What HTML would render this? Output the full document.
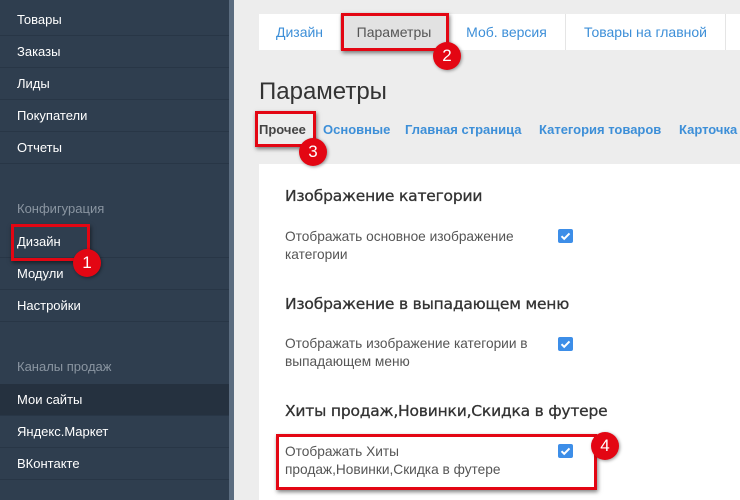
<!DOCTYPE html>
<html><head><meta charset="utf-8"><style>
*{margin:0;padding:0;box-sizing:border-box}
body{width:740px;height:500px;overflow:hidden;background:#ededed;font-family:"Liberation Sans","DejaVu Sans",sans-serif;position:relative}
.sb{position:absolute;left:0;top:0;width:229px;height:500px;background:#2f3e4f}
.strip{position:absolute;left:229px;top:0;width:5px;height:500px;background:#5b6c7f}
.it{position:absolute;left:0;width:229px;height:32px;color:#fff;font-size:13px;padding-left:17px;line-height:32px;border-bottom:1px solid #283646}
.hd{position:absolute;left:17px;color:#8a95a1;font-size:13px}
.abs{position:absolute}
.red{position:absolute;border:3px solid #e30613;box-shadow:1px 2px 4px rgba(0,0,0,.5)}
.num{position:absolute;width:28px;height:28px;border-radius:50%;background:#e30613;color:#fff;font-size:17px;text-align:center;line-height:28px;box-shadow:1px 1px 3px rgba(0,0,0,.4)}
.tab{position:absolute;top:14px;height:36px;line-height:36px;font-size:14px;color:#3d8fd8;text-align:center}
.sub{position:absolute;top:122px;font-size:13px;font-weight:bold;color:#3d8fd8}
.h{position:absolute;left:285px;color:#333;font-family:"DejaVu Sans",sans-serif;font-size:15.5px;letter-spacing:-.2px;-webkit-text-stroke:.3px #333}
.lb{position:absolute;left:285px;font-size:13.7px;color:#555;line-height:18px}
.cb{position:absolute;left:558px;width:15px;height:14px;background:#3d8ee8;border-radius:2px}
</style></head><body>
<div class="sb"></div><div class="strip"></div>
<div class="it" style="top:4px">Товары</div>
<div class="it" style="top:36px">Заказы</div>
<div class="it" style="top:68px">Лиды</div>
<div class="it" style="top:100px">Покупатели</div>
<div class="it" style="top:132px">Отчеты</div>
<div class="hd" style="top:201px">Конфигурация</div>
<div class="it" style="top:226px">Дизайн</div>
<div class="it" style="top:258px">Модули</div>
<div class="it" style="top:290px">Настройки</div>
<div class="hd" style="top:359px">Каналы продаж</div>
<div class="it" style="top:384px;background:#25313f">Мои сайты</div>
<div class="it" style="top:416px">Яндекс.Маркет</div>
<div class="it" style="top:448px">ВКонтакте</div>

<div class="abs" style="left:259px;top:14px;width:481px;height:36px;background:#fff"></div>
<div class="tab" style="left:259px;width:81px">Дизайн</div>
<div class="tab" style="left:340px;width:108px;background:#e2e2e2;color:#555">Параметры</div>
<div class="tab" style="left:448px;width:118px;border-right:1px solid #e5e5e5">Моб. версия</div>
<div class="tab" style="left:566px;width:160px;border-right:1px solid #e5e5e5">Товары на главной</div>
<div class="abs" style="left:259px;top:78px;font-size:24px;color:#333">Параметры</div>
<div class="sub" style="left:259px;color:#444">Прочее</div>
<div class="sub" style="left:323px">Основные</div>
<div class="sub" style="left:405px">Главная страница</div>
<div class="sub" style="left:539px">Категория товаров</div>
<div class="sub" style="left:679px">Карточка</div>

<div class="abs" style="left:259px;top:164px;width:481px;height:336px;background:#fff"></div>
<div class="h" style="top:187px">Изображение категории</div>
<div class="lb" style="top:228px">Отображать основное изображение<br>категории</div>
<div class="cb" style="top:229px"><svg width="15" height="14" viewBox="0 0 15 14"><path d="M3.5 7.2l2.7 2.6 5.3-5.4" stroke="#fff" stroke-width="2" fill="none"/></svg></div>
<div class="h" style="top:295px">Изображение в выпадающем меню</div>
<div class="lb" style="top:335px">Отображать изображение категории в<br>выпадающем меню</div>
<div class="cb" style="top:337px"><svg width="15" height="14" viewBox="0 0 15 14"><path d="M3.5 7.2l2.7 2.6 5.3-5.4" stroke="#fff" stroke-width="2" fill="none"/></svg></div>
<div class="h" style="top:402px">Хиты продаж,Новинки,Скидка в футере</div>
<div class="lb" style="top:443px">Отображать Хиты<br>продаж,Новинки,Скидка в футере</div>
<div class="cb" style="top:444px"><svg width="15" height="14" viewBox="0 0 15 14"><path d="M3.5 7.2l2.7 2.6 5.3-5.4" stroke="#fff" stroke-width="2" fill="none"/></svg></div>

<div class="red" style="left:11px;top:224px;width:79px;height:37px"></div>
<div class="num" style="left:73px;top:249px">1</div>
<div class="red" style="left:341px;top:13px;width:108px;height:38px"></div>
<div class="num" style="left:433px;top:42px">2</div>
<div class="red" style="left:255px;top:111px;width:61px;height:36px"></div>
<div class="num" style="left:299px;top:138px">3</div>
<div class="red" style="left:276px;top:434px;width:321px;height:56px"></div>
<div class="num" style="left:591px;top:432px">4</div>
</body></html>
